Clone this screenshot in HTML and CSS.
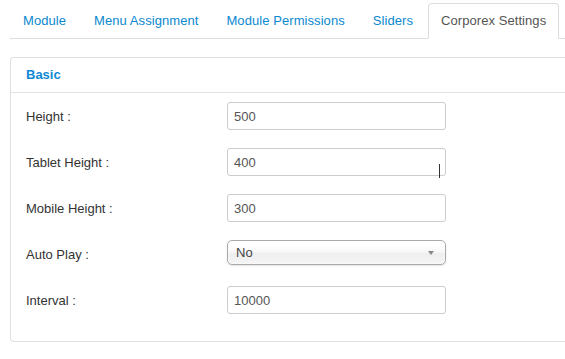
FILE: index.html
```html
<!DOCTYPE html>
<html lang="en">
<head>
    <meta charset="UTF-8">
    <title>Corporex Settings</title>
    <link rel="stylesheet" href="styles.css">
</head>
<body>
    <div class="page">
        <!-- tabs -->
        <ul class="nav-tabs">
            <li><a href="#">Module</a></li>
            <li><a href="#">Menu Assignment</a></li>
            <li><a href="#">Module Permissions</a></li>
            <li><a href="#">Sliders</a></li>
            <li class="active"><a href="#">Corporex Settings</a></li>
        </ul>

        <!-- settings panel -->
        <div class="panel">
            <div class="panel-heading">Basic</div>
            <div class="panel-body">
                <div class="form-row">
                    <label>Height :</label>
                    <div class="field"><input type="text" value="500"></div>
                </div>
                <div class="form-row">
                    <label>Tablet Height :</label>
                    <div class="field">
                        <input type="text" value="400">
                        <span class="mouse-caret"></span>
                    </div>
                </div>
                <div class="form-row">
                    <label>Mobile Height :</label>
                    <div class="field"><input type="text" value="300"></div>
                </div>
                <div class="form-row">
                    <label>Auto Play :</label>
                    <div class="field">
                        <div class="chosen-single"><span>No</span><b></b></div>
                    </div>
                </div>
                <div class="form-row">
                    <label>Interval :</label>
                    <div class="field"><input type="text" value="10000"></div>
                </div>
            </div>
        </div>
    </div>
</body>
</html>
```

FILE: styles.css
```css
/* reset */
* {
    margin: 0;
    padding: 0;
    box-sizing: border-box;
}

body {
    background: #fff;
    font-family: "Liberation Sans", Arial, sans-serif;
    font-size: 13px;
    color: #333;
}

/* the panel runs on past the right edge of the window */
.page {
    padding-left: 10px;
}

/* tabs */
.nav-tabs {
    list-style: none;
    display: flex;
    padding-top: 3px;
    border-bottom: 1px solid #ddd;
}

.nav-tabs li {
    margin-bottom: -1px;
}

.nav-tabs a {
    display: block;
    margin-right: 2px;
    padding: 7px 12px;
    line-height: 20px;
    letter-spacing: 0.07px;
    border: 1px solid transparent;
    border-radius: 4px 4px 0 0;
    color: #0a88d0;
    text-decoration: none;
}

.nav-tabs .active a {
    color: #555;
    background: #fff;
    border-color: #ddd #ddd transparent;
}

/* panel */
.panel {
    margin-top: 18px;
    border: 1px solid #e0e0e0;
    border-right: none;
    border-radius: 4px 0 0 4px;
}

.panel-heading {
    padding: 7px 15px;
    line-height: 20px;
    font-weight: bold;
    color: #1188d4;
    border-bottom: 1px solid #e3e3e3;
}

.panel-body {
    padding: 9px 15px 27px;
    display: flex;
    flex-direction: column;
    gap: 18px;
}

.form-row {
    display: flex;
    align-items: center;
    height: 28px;
}

.form-row label {
    width: 201px;
}

.field {
    position: relative;
    width: 219px;
}

.field input {
    display: block;
    width: 100%;
    height: 28px;
    padding: 0 6px;
    border: 1px solid #ccc;
    border-radius: 3px;
    font-family: inherit;
    font-size: 13px;
    color: #555;
    background: #fff;
}

/* I-beam mouse pointer over the tablet field */
.mouse-caret {
    position: absolute;
    left: 212px;
    top: 16px;
    width: 1px;
    height: 14px;
    background: #333;
}

/* chosen style dropdown */
.chosen-single {
    position: relative;
    height: 25px;
    margin-bottom: 3px;
    padding-left: 8px;
    line-height: 23px;
    border: 1px solid #aaa;
    border-radius: 5px;
    background: linear-gradient(#fff 20%, #f6f6f6 50%, #eee 52%, #f4f4f4 100%);
    box-shadow: 0 0 3px #fff inset, 0 1px 2px rgba(0, 0, 0, 0.12);
    color: #444;
}

.chosen-single b {
    position: absolute;
    right: 11px;
    top: 10px;
    border-left: 3px solid transparent;
    border-right: 3px solid transparent;
    border-top: 4px solid #888;
}
```
